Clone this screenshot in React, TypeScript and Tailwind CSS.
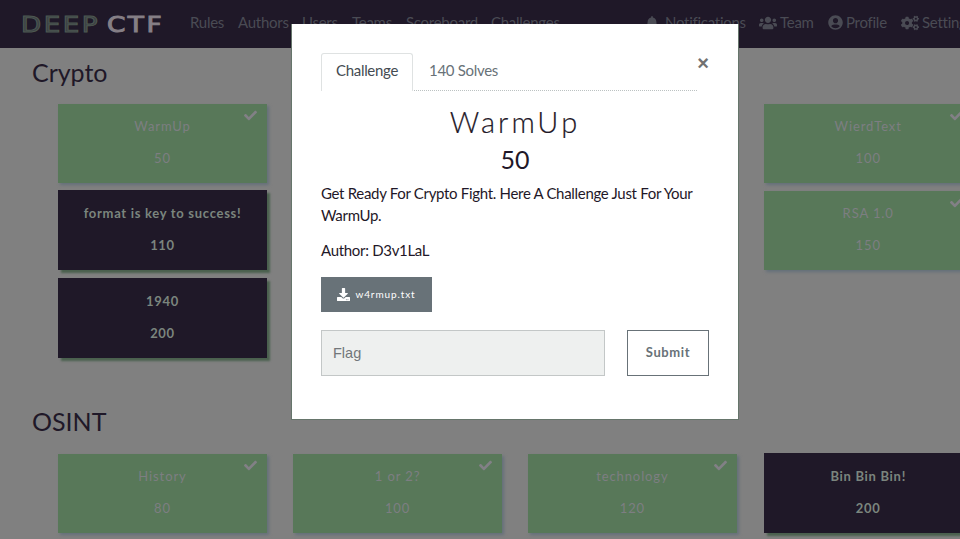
import type { ReactNode } from "react";
import { FaBell, FaCheck, FaCogs, FaDownload, FaUserCircle, FaUsers } from "react-icons/fa";

type Challenge = { name: string; points: number; solved?: boolean };

const cryptoColumns: Challenge[][] = [
  [
    { name: "WarmUp", points: 50, solved: true },
    { name: "format is key to success!", points: 110 },
    { name: "1940", points: 200 },
  ],
  [],
  [],
  [
    { name: "WierdText", points: 100, solved: true },
    { name: "RSA 1.0", points: 150, solved: true },
  ],
];

const osintColumns: Challenge[][] = [
  [{ name: "History", points: 80, solved: true }],
  [{ name: "1 or 2?", points: 100, solved: true }],
  [{ name: "technology", points: 120, solved: true }],
  [{ name: "Bin Bin Bin!", points: 200 }],
];

function ChallengeCard({ name, points, solved }: Challenge) {
  const tone = solved
    ? "mt-px h-[79px] pt-[12px] bg-[#587859] text-[#7d7e82] font-normal tracking-[0.9px] shadow-[2px_2px_3px_#64707a]"
    : "h-20 pt-[13px] bg-[#1f1828] text-[#7b857e] font-bold tracking-[0.7px] shadow-[3px_3px_2px_#4a604e]";
  return (
    <div className={`relative flex w-[209px] flex-col items-center text-[13px] leading-5 ${tone}`}>
      <p className="h-8">{name}</p>
      <p>{points}</p>
      {solved && <FaCheck className="absolute top-[5px] right-[10px] size-[13px] text-[#828086]" />}
    </div>
  );
}

function Category({ title, columns }: { title: string; columns: Challenge[][] }) {
  return (
    <section className="shrink-0 pl-8">
      <h3 className="text-[25px] leading-[30px] text-[#1f1828]">{title}</h3>
      <div className="mt-[16.25px] ml-[26px] grid w-[940.8px] grid-cols-[235.1px_234.8px_235.8px_235.1px]">
        {columns.map((column, i) => (
          <div key={i} className="flex flex-col gap-[7.15px]">
            {column.map((c) => (
              <ChallengeCard key={c.name} {...c} />
            ))}
          </div>
        ))}
      </div>
    </section>
  );
}

function NavIconLink({ icon, label, width }: { icon: ReactNode; label: string; width: string }) {
  return (
    <a className={`flex shrink-0 items-center ${width}`}>
      {icon}
      {label}
    </a>
  );
}

function Logo() {
  return (
    <svg width="142" height="24" viewBox="0 0 142 24" className="mt-[2px] overflow-visible font-['DejaVu_Sans']" fontSize="21.5" strokeWidth="1">
      <text x="0" y="19.5" textLength="79" lengthAdjust="spacingAndGlyphs" letterSpacing="2" fill="#3b3f44" stroke="#4c5851">
        DEEP
      </text>
      <text x="86" y="19.5" textLength="57" lengthAdjust="spacingAndGlyphs" letterSpacing="2" fill="#857f86" stroke="#857f86">
        CTF
      </text>
    </svg>
  );
}

function Navbar() {
  return (
    <nav className="flex h-12 shrink-0 items-center bg-[#1f1828] pb-[3px] pl-[21px] text-[15px] tracking-[-0.27px] whitespace-nowrap text-[#4a4b54]">
      <a className="w-[169px] shrink-0">
        <Logo />
      </a>
      <a className="w-12 shrink-0">Rules</a>
      <a className="w-16 shrink-0">Authors</a>
      <a className="w-[50px] shrink-0">Users</a>
      <a className="w-[54px] shrink-0">Teams</a>
      <a className="w-[85px] shrink-0">Scoreboard</a>
      <a className="w-[154px] shrink-0">Challenges</a>
      <NavIconLink width="w-[114px]" label="Notifications" icon={<FaBell className="mr-[6px] size-[14px]" />} />
      <NavIconLink width="w-[69px]" label="Team" icon={<FaUsers className="mr-[3px] size-[18px]" />} />
      <NavIconLink width="w-[73px]" label="Profile" icon={<FaUserCircle className="mr-[3px] size-[15px]" />} />
      <NavIconLink width="w-[80px]" label="Settings" icon={<FaCogs className="mr-[3px] size-[18px]" />} />
    </nav>
  );
}

function ChallengeModal() {
  return (
    <div className="absolute top-6 left-[291px] h-[396px] w-[448px] border border-t-0 border-[#66756b] bg-white px-[29px] pt-[29px] text-[15px] leading-[22px] tracking-[-0.31px] text-[#1f1828]">
      <div className="flex">
        <div className="flex h-[38px] w-[376px] border-b border-dotted border-[#bcc2c2]">
          <button className="h-[38px] w-[92px] rounded-t-[3px] border border-b-0 border-[#dfe2e2] bg-white pb-[5px] text-[#444b52]">
            Challenge
          </button>
          <button className="ml-4 pb-[3px] text-[#687278]">140 Solves</button>
        </div>
        <button className="h-5 w-3 font-['Liberation_Sans'] text-[20px] leading-[20px] font-bold text-[#727272]">×</button>
      </div>
      <h2 className="mt-[13px] text-center text-[29px] leading-[36px] font-light tracking-[3.1px] [-webkit-text-stroke:0.2px_#1f1828]">
        WarmUp
      </h2>
      <h3 className="mt-[4px] text-center text-[25px] leading-[30px] tracking-normal">50</h3>
      <p className="mt-[8px]">Get Ready For Crypto Fight. Here A Challenge Just For Your WarmUp.</p>
      <p className="mt-[13px]">Author: D3v1LaL</p>
      <button className="mt-[16px] flex h-[35px] w-[111px] items-center justify-center gap-[5px] bg-[#687278] pb-px text-[10px] tracking-[0.9px] text-white">
        <FaDownload className="size-[13px]" />
        w4rmup.txt
      </button>
      <div className="mt-[18px] flex justify-between">
        <input
          placeholder="Flag"
          className="h-[46px] w-[284px] border border-[#c3c7c7] bg-[#eef0ef] px-[11px] font-['Liberation_Sans'] text-[14.5px] tracking-normal placeholder:text-[#72777a]"
        />
        <button className="h-[46px] w-[82px] border border-[#687278] pb-[2px] text-[13px] font-bold tracking-[0.6px] text-[#687278]">
          Submit
        </button>
      </div>
    </div>
  );
}

export default function App() {
  return (
    <div className="relative flex h-[539px] w-full flex-col overflow-hidden bg-[#808080] font-['Lato',sans-serif]">
      <Navbar />
      <main className="grid grid-rows-[349.4px_349px] pt-[9px]">
        <Category title="Crypto" columns={cryptoColumns} />
        <Category title="OSINT" columns={osintColumns} />
      </main>
      <ChallengeModal />
    </div>
  );
}
